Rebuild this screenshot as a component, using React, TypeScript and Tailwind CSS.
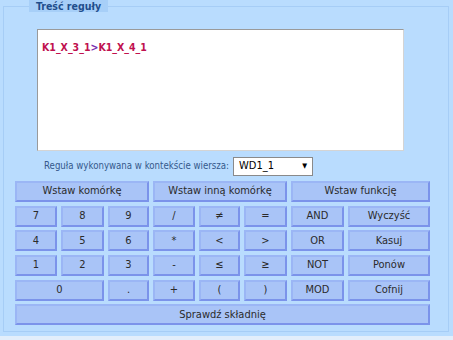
const btn =
  "flex items-center justify-center h-[21px] bg-[#a9c4f7] border-2 border-t-[#9bb6f5] border-l-[#9bb6f5] border-b-[#7b93ea] border-r-[#7b93ea] text-[11px] text-[#2b2b2b] whitespace-nowrap";

const rows: { label: string; span?: string }[][] = [
  [
    { label: "7" },
    { label: "8" },
    { label: "9" },
    { label: "/" },
    { label: "≠" },
    { label: "=" },
    { label: "AND" },
    { label: "Wyczyść" },
  ],
  [
    { label: "4" },
    { label: "5" },
    { label: "6" },
    { label: "*" },
    { label: "<" },
    { label: ">" },
    { label: "OR" },
    { label: "Kasuj" },
  ],
  [
    { label: "1" },
    { label: "2" },
    { label: "3" },
    { label: "-" },
    { label: "≤" },
    { label: "≥" },
    { label: "NOT" },
    { label: "Ponów" },
  ],
  [
    { label: "0", span: "col-span-2" },
    { label: "." },
    { label: "+" },
    { label: "(" },
    { label: ")" },
    { label: "MOD" },
    { label: "Cofnij" },
  ],
];

export default function App() {
  return (
    <div
      className="relative w-[453px] h-[340px] overflow-hidden bg-[#b9dcfe]"
      style={{ fontFamily: '"DejaVu Sans Condensed", "Liberation Sans", sans-serif' }}
    >
      <fieldset className="ml-[3px] w-[446px] h-[332px] border border-[#a6cdf6] pl-[11px]">
        <legend className="ml-[14px] px-[7px] h-[12px] leading-[12px] bg-[#a7cff8] text-[10.5px] font-bold text-[#1f4e8c]">
          Treść reguły
        </legend>

        {/* rule text */}
        <div className="mt-[17px] ml-[22px] w-[367px] h-[122px] bg-white border border-t-[#9a9a9a] border-l-[#9a9a9a] border-b-[#d4d4d4] border-r-[#d4d4d4] px-[4px] pt-[4px]">
          <span className="text-[10.5px] font-bold text-[#c0114f]">
            K1_X_3_1<span className="text-[#7a2fb0]">&gt;</span>K1_X_4_1
          </span>
        </div>

        {/* context row */}
        <div className="flex items-center mt-[6px] ml-[29px] h-[19px]">
          <span className="w-[187px] text-[9.6px] text-[#35598c] whitespace-nowrap">
            Reguła wykonywana w kontekście wiersza:
          </span>
          <div className="ml-[2px] flex items-center w-[80px] h-[19px] bg-white border border-[#8a8a8a] pl-[5px] pr-[5px]">
            <span className="text-[11px] text-black">WD1_1</span>
            <span className="ml-auto text-[7px] text-black">▼</span>
          </div>
        </div>

        {/* buttons */}
        <div className="mt-[5px] grid grid-cols-[42px_43px_41px_42px_41px_43px_53px_82px] gap-x-[4px] gap-y-[3.7px]">
          <div className={`${btn} col-span-3`}>Wstaw komórkę</div>
          <div className={`${btn} col-span-3`}>Wstaw inną komórkę</div>
          <div className={`${btn} col-span-2`}>Wstaw funkcję</div>
          {rows.map((r) =>
            r.map((b, i) => (
              <div key={b.label + i} className={`${btn} ${b.span ?? ""}`}>
                {b.label}
              </div>
            ))
          )}
          <div className={`${btn} col-span-8`}>Sprawdź składnię</div>
        </div>
      </fieldset>
      <div className="absolute left-0 bottom-0 w-full h-[4px] bg-[#e2eefb]" />
    </div>
  );
}
